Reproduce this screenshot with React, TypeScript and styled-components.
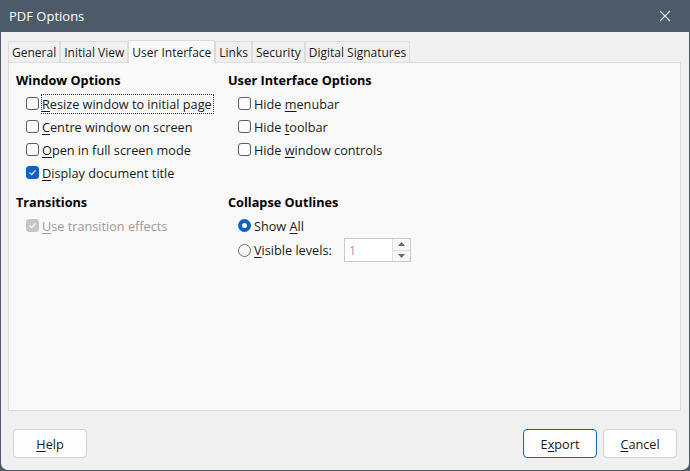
import * as React from "react";
import styled, { createGlobalStyle, css } from "styled-components";

const Global = createGlobalStyle`
  html, body {
    margin: 0;
    padding: 0;
    background: #4d5a69;
  }
  body {
    font-family: "Open Sans", "Noto Sans", sans-serif;
    font-size: 12.7px;
    color: #1b1b1b;
  }
`;

const Window = styled.div`
  width: 690px;
  height: 471px;
  display: flex;
  flex-direction: column;
  background: #4d5a69;
`;

const TitleBar = styled.div`
  height: 32px;
  display: flex;
  align-items: center;
  justify-content: space-between;
  padding: 0 19px 0 9px;
  color: #ffffff;
  font-size: 13px;
  flex-shrink: 0;
`;

const Body = styled.div`
  flex: 1;
  margin: 0 1px 1px;
  background: #f0f0f0;
  border-radius: 0 0 7px 7px;
  padding: 8px 8px 0 7px;
  display: flex;
  flex-direction: column;
`;

const TabStrip = styled.div`
  display: flex;
  align-items: flex-end;
  height: 22px;
  position: relative;
  z-index: 2;
  font-size: 12px;
`;

const Tab = styled.div<{ $active?: boolean }>`
  height: 21px;
  box-sizing: border-box;
  padding: 0 3px;
  display: flex;
  align-items: center;
  background: #f0f0f0;
  border: 1px solid #dcdcdc;
  border-bottom: none;
  white-space: nowrap;
  ${(p) =>
    p.$active &&
    css`
      height: 23px;
      margin-bottom: -1px;
      background: #f9f9f9;
    `}
`;

const Panel = styled.div`
  height: 349px;
  box-sizing: border-box;
  background: #f9f9f9;
  border: 1px solid #dcdcdc;
  padding: 8px 7px;
  display: grid;
  grid-template-columns: 212px 1fr;
  align-content: start;
  row-gap: 9px;
`;

const Group = styled.div`
  display: flex;
  flex-direction: column;
`;

const Heading = styled.div`
  font-weight: 700;
  font-size: 12.7px;
  line-height: 18px;
  color: #000;
  margin-bottom: 3px;
`;

const Row = styled.label<{ $indent: number; $disabled?: boolean; $tall?: boolean }>`
  display: flex;
  align-items: center;
  gap: 3px;
  height: ${(p) => (p.$tall ? 26 : 23)}px;
  padding-left: ${(p) => p.$indent}px;
  color: ${(p) => (p.$disabled ? "#9c9c9c" : "#1b1b1b")};
  white-space: nowrap;
`;

const Box = styled.span<{ $checked?: boolean; $disabled?: boolean }>`
  width: 13px;
  height: 13px;
  box-sizing: border-box;
  border-radius: 3px;
  border: 1px solid #5f5f5f;
  background: #fbfbfb;
  display: flex;
  align-items: center;
  justify-content: center;
  flex-shrink: 0;
  ${(p) =>
    p.$checked &&
    css`
      background: #0f62c2;
      border-color: #0f62c2;
    `}
  ${(p) =>
    p.$disabled &&
    css`
      background: #c6c6c6;
      border-color: #c6c6c6;
    `}
`;

const Radio = styled.span<{ $checked?: boolean }>`
  width: 13px;
  height: 13px;
  box-sizing: border-box;
  border-radius: 50%;
  flex-shrink: 0;
  ${(p) =>
    p.$checked
      ? css`
          border: 4px solid #0f62c2;
          background: #fff;
        `
      : css`
          border: 1px solid #6a6a6a;
          background: #fbfbfb;
        `}
`;

const Focus = styled.span`
  outline: 1px dotted #333;
  outline-offset: 0;
  padding: 0 1px 0 0;
`;

const Mn = styled.span`
  text-decoration: underline;
  text-underline-offset: 2px;
`;

const Spin = styled.div`
  margin-left: 9px;
  width: 67px;
  height: 24px;
  box-sizing: border-box;
  border: 1px solid #cacaca;
  background: #fff;
  display: flex;
`;

const SpinValue = styled.div`
  flex: 1;
  padding-left: 4px;
  display: flex;
  align-items: center;
  color: #a4a4a4;
  font-size: 13px;
`;

const SpinButtons = styled.div`
  width: 17px;
  border-left: 1px solid #dedede;
  display: flex;
  flex-direction: column;
  background: #f7f7f7;
`;

const SpinHalf = styled.div<{ $top?: boolean }>`
  flex: 1;
  display: flex;
  align-items: center;
  justify-content: center;
  border-bottom: ${(p) => (p.$top ? "1px solid #dedede" : "none")};
`;

const Footer = styled.div`
  margin-top: 18px;
  display: flex;
  gap: 6px;
  padding: 0 4px 0 5px;
`;

const Spacer = styled.div`
  flex: 1;
`;

const Button = styled.button<{ $default?: boolean }>`
  width: 74px;
  height: 29px;
  box-sizing: border-box;
  background: #fdfdfd;
  border: 1px solid ${(p) => (p.$default ? "#0f62c2" : "#d3d3d3")};
  border-radius: 4px;
  font-family: "Open Sans", "Noto Sans", sans-serif;
  font-size: 12.7px;
  color: #1b1b1b;
  padding: 0;
`;

const Check = () => (
  <svg width="9" height="9" viewBox="0 0 9 9">
    <polyline points="1.5,4.6 3.6,6.6 7.5,2.4" fill="none" stroke="#fff" strokeWidth="1.2" />
  </svg>
);

const Arrow = ({ up }: { up?: boolean }) => (
  <svg width="7" height="4" viewBox="0 0 7 4">
    <polygon points={up ? "0,4 7,4 3.5,0" : "0,0 7,0 3.5,4"} fill="#6b6b6b" />
  </svg>
);

const CloseIcon = () => (
  <svg width="12" height="12" viewBox="0 0 12 12">
    <path d="M1 1 L11 11 M11 1 L1 11" stroke="#e8ebee" strokeWidth="1.1" />
  </svg>
);

const tabs = ["General", "Initial View", "User Interface", "Links", "Security", "Digital Signatures"];

const App = () => {
  return (
    <Window>
      <Global />
      <TitleBar>
        <span>PDF Options</span>
        <CloseIcon />
      </TitleBar>
      <Body>
        <TabStrip>
          {tabs.map((t) => (
            <Tab key={t} $active={t === "User Interface"}>
              {t}
            </Tab>
          ))}
        </TabStrip>
        <Panel>
          <Group>
            <Heading>Window Options</Heading>
            <Row $indent={10}>
              <Box />
              <Focus>
                <Mn>R</Mn>esize window to initial page
              </Focus>
            </Row>
            <Row $indent={10}>
              <Box />
              <span>
                <Mn>C</Mn>entre window on screen
              </span>
            </Row>
            <Row $indent={10}>
              <Box />
              <span>
                <Mn>O</Mn>pen in full screen mode
              </span>
            </Row>
            <Row $indent={10}>
              <Box $checked>
                <Check />
              </Box>
              <span>
                <Mn>D</Mn>isplay document title
              </span>
            </Row>
          </Group>
          <Group>
            <Heading>User Interface Options</Heading>
            <Row $indent={10}>
              <Box />
              <span>
                Hide <Mn>m</Mn>enubar
              </span>
            </Row>
            <Row $indent={10}>
              <Box />
              <span>
                Hide <Mn>t</Mn>oolbar
              </span>
            </Row>
            <Row $indent={10}>
              <Box />
              <span>
                Hide <Mn>w</Mn>indow controls
              </span>
            </Row>
          </Group>
          <Group>
            <Heading>Transitions</Heading>
            <Row $indent={10} $disabled>
              <Box $disabled>
                <Check />
              </Box>
              <span>
                <Mn>U</Mn>se transition effects
              </span>
            </Row>
          </Group>
          <Group>
            <Heading>Collapse Outlines</Heading>
            <Row $indent={10}>
              <Radio $checked />
              <span>
                Show <Mn>A</Mn>ll
              </span>
            </Row>
            <Row $indent={10} $tall>
              <Radio />
              <span>
                <Mn>V</Mn>isible levels:
              </span>
              <Spin>
                <SpinValue>1</SpinValue>
                <SpinButtons>
                  <SpinHalf $top>
                    <Arrow up />
                  </SpinHalf>
                  <SpinHalf>
                    <Arrow />
                  </SpinHalf>
                </SpinButtons>
              </Spin>
            </Row>
          </Group>
        </Panel>
        <Footer>
          <Button>
            <Mn>H</Mn>elp
          </Button>
          <Spacer />
          <Button $default>
            E<Mn>x</Mn>port
          </Button>
          <Button>
            <Mn>C</Mn>ancel
          </Button>
        </Footer>
      </Body>
    </Window>
  );
};

export default App;
